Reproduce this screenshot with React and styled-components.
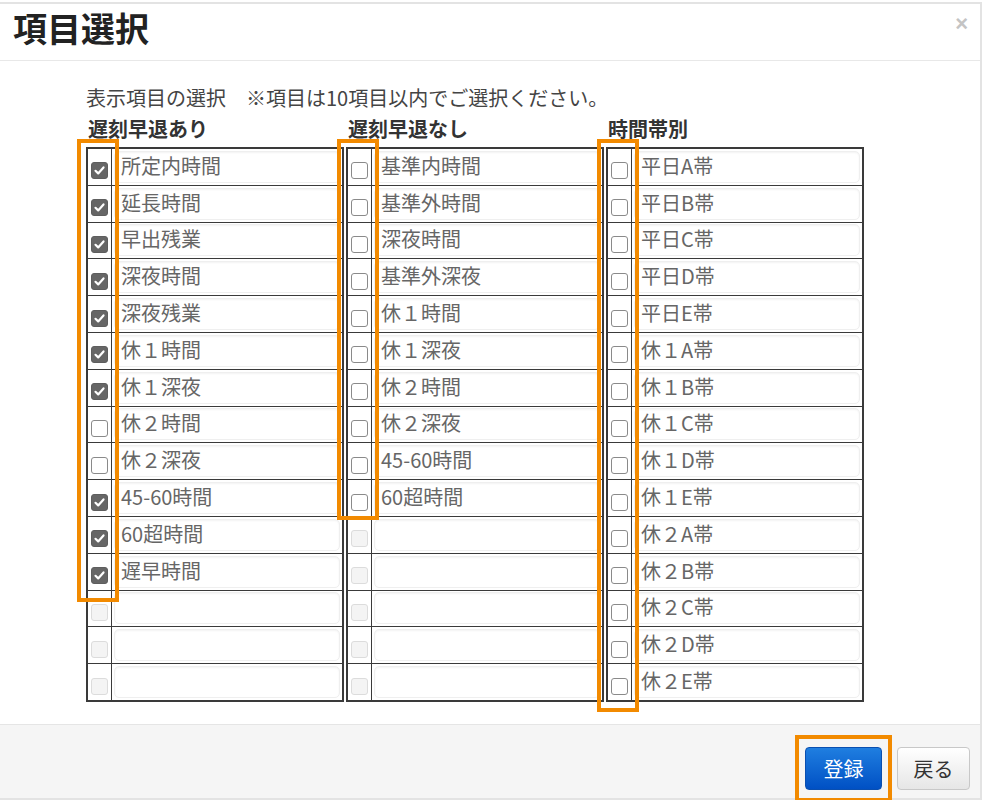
import React from "react";
import styled, { createGlobalStyle } from "styled-components";

const GlobalStyle = createGlobalStyle`
  body {
    margin: 0;
    background: #ffffff;
    font-family: "Noto Sans CJK JP", "Noto Sans", "Liberation Sans", sans-serif;
  }
`;

const ROW_H = 37;

const columns = [
  {
    title: "遅刻早退あり",
    rows: [
      ["所定内時間", true],
      ["延長時間", true],
      ["早出残業", true],
      ["深夜時間", true],
      ["深夜残業", true],
      ["休１時間", true],
      ["休１深夜", true],
      ["休２時間", false],
      ["休２深夜", false],
      ["45-60時間", true],
      ["60超時間", true],
      ["遅早時間", true],
      [null],
      [null],
      [null],
    ],
    mark: { rows: 12, extra: 19 },
  },
  {
    title: "遅刻早退なし",
    rows: [
      ["基準内時間", false],
      ["基準外時間", false],
      ["深夜時間", false],
      ["基準外深夜", false],
      ["休１時間", false],
      ["休１深夜", false],
      ["休２時間", false],
      ["休２深夜", false],
      ["45-60時間", false],
      ["60超時間", false],
      [null],
      [null],
      [null],
      [null],
      [null],
    ],
    mark: { rows: 10, extra: 11 },
  },
  {
    title: "時間帯別",
    rows: [
      "平日A帯", "平日B帯", "平日C帯", "平日D帯", "平日E帯",
      "休１A帯", "休１B帯", "休１C帯", "休１D帯", "休１E帯",
      "休２A帯", "休２B帯", "休２C帯", "休２D帯", "休２E帯",
    ].map((t) => [t, false]),
    mark: { rows: 15, extra: 18 },
  },
];

const Checkbox = ({ checked, disabled }) => (
  <Box $checked={checked} $disabled={disabled}>
    {checked && (
      <svg width="13" height="13" viewBox="0 0 13 13">
        <path d="M2.5 6.8 L5.2 9.4 L10.5 3.4" fill="none" stroke="#fff" strokeWidth="2.2" strokeLinecap="round" strokeLinejoin="round" />
      </svg>
    )}
  </Box>
);

const App = () => {
  return (
    <>
      <GlobalStyle />
      <Modal>
        <Header>
          <Title>項目選択</Title>
          <Close>×</Close>
        </Header>
        <Body>
          <Note>表示項目の選択　※項目は10項目以内でご選択ください。</Note>
          <Columns>
            {columns.map((col) => (
              <Column key={col.title}>
                <Heading>{col.title}</Heading>
                <TableWrap>
                  <Table>
                    <tbody>
                      {col.rows.map(([label, checked], i) => (
                        <tr key={i}>
                          <CheckCell>
                            <Checkbox checked={checked} disabled={label === null} />
                          </CheckCell>
                          <LabelCell>
                            <LabelBox>{label}</LabelBox>
                          </LabelCell>
                        </tr>
                      ))}
                    </tbody>
                  </Table>
                  <Highlight style={{ height: col.mark.rows * ROW_H + col.mark.extra }} />
                </TableWrap>
              </Column>
            ))}
          </Columns>
        </Body>
        <Footer>
          <PrimaryWrap>
            <Button $primary>登録</Button>
            <ButtonMark />
          </PrimaryWrap>
          <Button>戻る</Button>
        </Footer>
      </Modal>
    </>
  );
};

export default App;

const Modal = styled.div`
  margin-top: 2px;
  width: 980px;
  border: 2px solid #e3e3e3;
  border-left: none;
  background: #fff;
`;

const Header = styled.div`
  height: 56px;
  display: flex;
  align-items: center;
  justify-content: space-between;
  padding: 0 14px 0 13px;
  border-bottom: 1px solid #e8e8e8;
`;

const Title = styled.h1`
  margin: -8px 0 0 0;
  font-size: 34px;
  line-height: 40px;
  font-weight: 700;
  color: #222;
`;

const Close = styled.span`
  font-family: "Liberation Sans", sans-serif;
  font-size: 22px;
  font-weight: 700;
  color: #c4c4c4;
  margin-top: -16px;
  margin-right: -2px;
`;

const Body = styled.div`
  padding: 25px 0 22px 86px;
`;

const Note = styled.p`
  margin: 0;
  font-size: 20px;
  line-height: 24px;
  color: #444;
`;

const Columns = styled.div`
  display: flex;
  gap: 2px;
  margin-top: 7px;
`;

const Column = styled.div`
  width: 258px;
  display: flex;
  flex-direction: column;
`;

const Heading = styled.h2`
  margin: 0 0 6px 2px;
  font-size: 20px;
  line-height: 24px;
  font-weight: 700;
  color: #333;
`;

const TableWrap = styled.div`
  position: relative;
`;

const Table = styled.table`
  width: 100%;
  border-collapse: collapse;
  border: 2px solid #3a3a3a;
`;

const CheckCell = styled.td`
  width: 23px;
  height: 35.8px;
  padding: 0;
  border: 1.5px solid #3a3a3a;
  text-align: center;
  vertical-align: middle;
`;

const LabelCell = styled.td`
  padding: 1px 2px 1px 2px;
  border: 1.5px solid #3a3a3a;
  vertical-align: middle;
`;

const LabelBox = styled.div`
  height: 32px;
  box-sizing: border-box;
  padding: 0 6px;
  border: 1px solid #efefef;
  border-radius: 5px;
  box-shadow: inset 0 1px 2px rgba(0, 0, 0, 0.05);
  font-size: 20px;
  line-height: 28px;
  color: #666;
  white-space: nowrap;
`;

const Box = styled.span`
  display: inline-flex;
  align-items: center;
  justify-content: center;
  width: 17px;
  height: 17px;
  box-sizing: border-box;
  margin-top: 4px;
  border-radius: 3px;
  border: 1px solid ${(p) => (p.$checked ? "#5e5e5e" : p.$disabled ? "#dcdcdc" : "#8a8a8a")};
  background: ${(p) => (p.$checked ? "#666" : p.$disabled ? "#f4f4f4" : "#fff")};
  vertical-align: middle;
`;

const Highlight = styled.div`
  position: absolute;
  top: -8px;
  left: -9px;
  width: 42px;
  box-sizing: border-box;
  border: 4px solid #f28a00;
  pointer-events: none;
`;

const Footer = styled.div`
  height: 74px;
  box-sizing: border-box;
  display: flex;
  justify-content: flex-end;
  align-items: flex-start;
  gap: 15px;
  padding: 22px 10px 0 0;
  border-top: 1px solid #e5e5e5;
  background: #f5f5f5;
`;

const PrimaryWrap = styled.div`
  position: relative;
`;

const Button = styled.button`
  height: 43px;
  min-width: ${(p) => (p.$primary ? "77px" : "73px")};
  padding: 0 14px;
  border-radius: 4px;
  font-family: "Noto Sans CJK JP", "Noto Sans", sans-serif;
  font-size: 20px;
  cursor: pointer;
  color: ${(p) => (p.$primary ? "#fff" : "#333")};
  border: 1px solid ${(p) => (p.$primary ? "#0a4fb0" : "#c8c8c8")};
  background: ${(p) =>
    p.$primary
      ? "linear-gradient(to bottom, #1f7ee0, #0050c4)"
      : "linear-gradient(to bottom, #ffffff, #e6e6e6)"};
`;

const ButtonMark = styled.div`
  position: absolute;
  top: -12px;
  left: -10px;
  right: -10px;
  height: 67px;
  box-sizing: border-box;
  border: 4px solid #f28a00;
  pointer-events: none;
`;
